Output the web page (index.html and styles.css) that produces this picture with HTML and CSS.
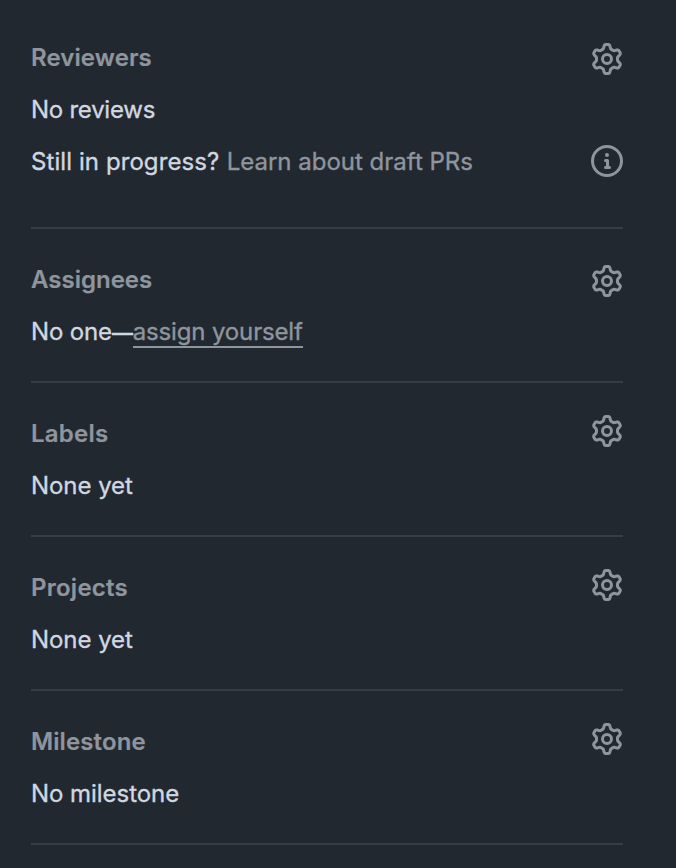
FILE: index.html
```html
<!DOCTYPE html>
<html lang="en">
<head>
<meta charset="utf-8">
<title>Pull request sidebar</title>
<link rel="stylesheet" href="styles.css">
</head>
<body>
<svg width="0" height="0" class="defs" aria-hidden="true">
<symbol id="gear" viewBox="0 0 16 16"><path d="M8 0a8.2 8.2 0 0 1 .701.031C9.444.095 9.99.645 10.16 1.29l.288 1.107c.018.066.079.158.212.224.231.114.454.243.668.386.123.082.233.09.299.071l1.103-.303c.644-.176 1.392.021 1.82.63.27.385.506.792.704 1.218.315.675.111 1.422-.364 1.891l-.814.806c-.049.048-.098.147-.088.294.016.257.016.515 0 .772-.01.147.038.246.088.294l.814.806c.475.469.679 1.216.364 1.891a7.977 7.977 0 0 1-.704 1.217c-.428.61-1.176.807-1.82.63l-1.102-.302c-.067-.019-.177-.011-.3.071a5.909 5.909 0 0 1-.668.386c-.133.066-.194.158-.211.224l-.29 1.106c-.168.646-.715 1.196-1.458 1.26a8.006 8.006 0 0 1-1.402 0c-.743-.064-1.289-.614-1.458-1.26l-.289-1.106c-.018-.066-.079-.158-.212-.224a5.738 5.738 0 0 1-.668-.386c-.123-.082-.233-.09-.299-.071l-1.103.303c-.644.176-1.392-.021-1.82-.63a8.12 8.12 0 0 1-.704-1.218c-.315-.675-.111-1.422.363-1.891l.815-.806c.05-.048.098-.147.088-.294a6.214 6.214 0 0 1 0-.772c.01-.147-.038-.246-.088-.294l-.815-.806C.635 6.045.431 5.298.746 4.623a7.92 7.92 0 0 1 .704-1.217c.428-.61 1.176-.807 1.82-.63l1.102.302c.067.019.177.011.3-.071.214-.143.437-.272.668-.386.133-.066.194-.158.211-.224l.29-1.106C6.009.645 6.556.095 7.299.03 7.53.01 7.764 0 8 0Zm-.571 1.525c-.036.003-.108.036-.137.146l-.289 1.105c-.147.561-.549.967-.998 1.189-.173.086-.34.183-.5.29-.417.278-.97.423-1.529.27l-1.103-.303c-.109-.03-.175.016-.195.045-.22.312-.412.644-.573.99-.014.031-.021.11.059.19l.815.806c.411.406.562.957.53 1.456a4.709 4.709 0 0 0 0 .582c.032.499-.119 1.05-.53 1.456l-.815.806c-.081.08-.073.159-.059.19.162.346.353.677.573.989.02.03.085.076.195.046l1.102-.303c.56-.153 1.113-.008 1.53.27.161.107.328.204.501.29.447.222.85.629.997 1.189l.289 1.105c.029.109.101.143.137.146a6.6 6.6 0 0 0 1.142 0c.036-.003.108-.036.137-.146l.289-1.105c.147-.561.549-.967.998-1.189.173-.086.34-.183.5-.29.417-.278.97-.423 1.529-.27l1.103.303c.109.029.175-.016.195-.045.22-.313.411-.644.573-.99.014-.031.021-.11-.059-.19l-.815-.806c-.411-.406-.562-.957-.53-1.456a4.709 4.709 0 0 0 0-.582c-.032-.499.119-1.05.53-1.456l.815-.806c.081-.08.073-.159.059-.19a6.464 6.464 0 0 0-.573-.989c-.02-.03-.085-.076-.195-.046l-1.102.303c-.56.153-1.113.008-1.53-.27a4.44 4.44 0 0 0-.501-.29c-.447-.222-.85-.629-.997-1.189l-.289-1.105c-.029-.11-.101-.143-.137-.146a6.6 6.6 0 0 0-1.142 0ZM11 8a3 3 0 1 1-6 0 3 3 0 0 1 6 0ZM9.5 8a1.5 1.5 0 1 0-3.001.001A1.5 1.5 0 0 0 9.5 8Z"/></symbol>
<symbol id="info" viewBox="0 0 16 16"><path d="M0 8a8 8 0 1 1 16 0A8 8 0 0 1 0 8Zm8-6.5a6.5 6.5 0 1 0 0 13 6.5 6.5 0 0 0 0-13ZM6.5 7.75A.75.75 0 0 1 7.25 7h1a.75.75 0 0 1 .75.75v2.75h.25a.75.75 0 0 1 0 1.5h-2a.75.75 0 0 1 0-1.5h.25v-2h-.25a.75.75 0 0 1-.75-.75ZM8 6a1 1 0 1 1 0-2 1 1 0 0 1 0 2Z"/></symbol>
</svg>
<main class="sidebar">
<section class="item">
<header class="head"><h2>Reviewers</h2><svg class="icon low"><use href="#gear"/></svg></header>
<p class="reviews">No reviews</p>
<div class="draft"><p class="progress">Still in progress? <a class="muted learn">Learn about draft PRs</a></p><svg class="icon"><use href="#info"/></svg></div>
</section>
<section class="item">
<header class="head"><h2 class="assignees">Assignees</h2><svg class="icon low"><use href="#gear"/></svg></header>
<p class="assign">No one<span class="dash">—</span><a class="muted underlined">assign yourself</a></p>
</section>
<section class="item">
<header class="head"><h2 class="loose">Labels</h2><svg class="icon"><use href="#gear"/></svg></header>
<p class="value">None yet</p>
</section>
<section class="item">
<header class="head"><h2 class="loose">Projects</h2><svg class="icon"><use href="#gear"/></svg></header>
<p class="value">None yet</p>
</section>
<section class="item">
<header class="head"><h2>Milestone</h2><svg class="icon"><use href="#gear"/></svg></header>
<p class="value">No milestone</p>
</section>
</main>
</body>
</html>
```
FILE: styles.css
```css
* { box-sizing: border-box; }
body { margin: 0; background: #22282f; color: #d0d7e0; font-family: Inter, "Liberation Sans", sans-serif; font-size: 24px; line-height: 36px; height: 868px; overflow: hidden; }
.defs { display: block; }
.sidebar { width: 592px; margin: 7px 0 0 31px; }
.item { border-bottom: 2px solid #373d45; padding: 33px 0 31px; }
.item:first-child { padding-bottom: 47px; }
.head, .draft { display: flex; justify-content: space-between; }
.head { height: 36px; margin-bottom: 16px; }
.draft { margin-top: 16px; height: 36px; }
h2 { margin: 0; font-size: 24px; line-height: 36px; font-weight: 600; letter-spacing: 0.1px; color: #8f959e; -webkit-text-stroke: 0.2px; }
.assignees { letter-spacing: 0; }
.loose { letter-spacing: 0.25px; }
p { margin: 0; white-space: nowrap; -webkit-text-stroke: 0.35px; }
.reviews { letter-spacing: -0.25px; }
.progress { letter-spacing: 0.08px; }
.learn { letter-spacing: 0; margin-left: 0.5px; }
.value { letter-spacing: -0.05px; }
.assign { letter-spacing: -0.15px; }
.dash { font-size: 21px; font-weight: 500; line-height: 1; }
.muted { color: #8f959e; }
.underlined { border-bottom: 2px solid #8f959e; }
.icon { width: 32px; height: 32px; fill: #8f959e; flex: none; margin-top: -1px; }
.low { margin-top: 3px; }
.draft .icon { margin-top: 1px; }
```
